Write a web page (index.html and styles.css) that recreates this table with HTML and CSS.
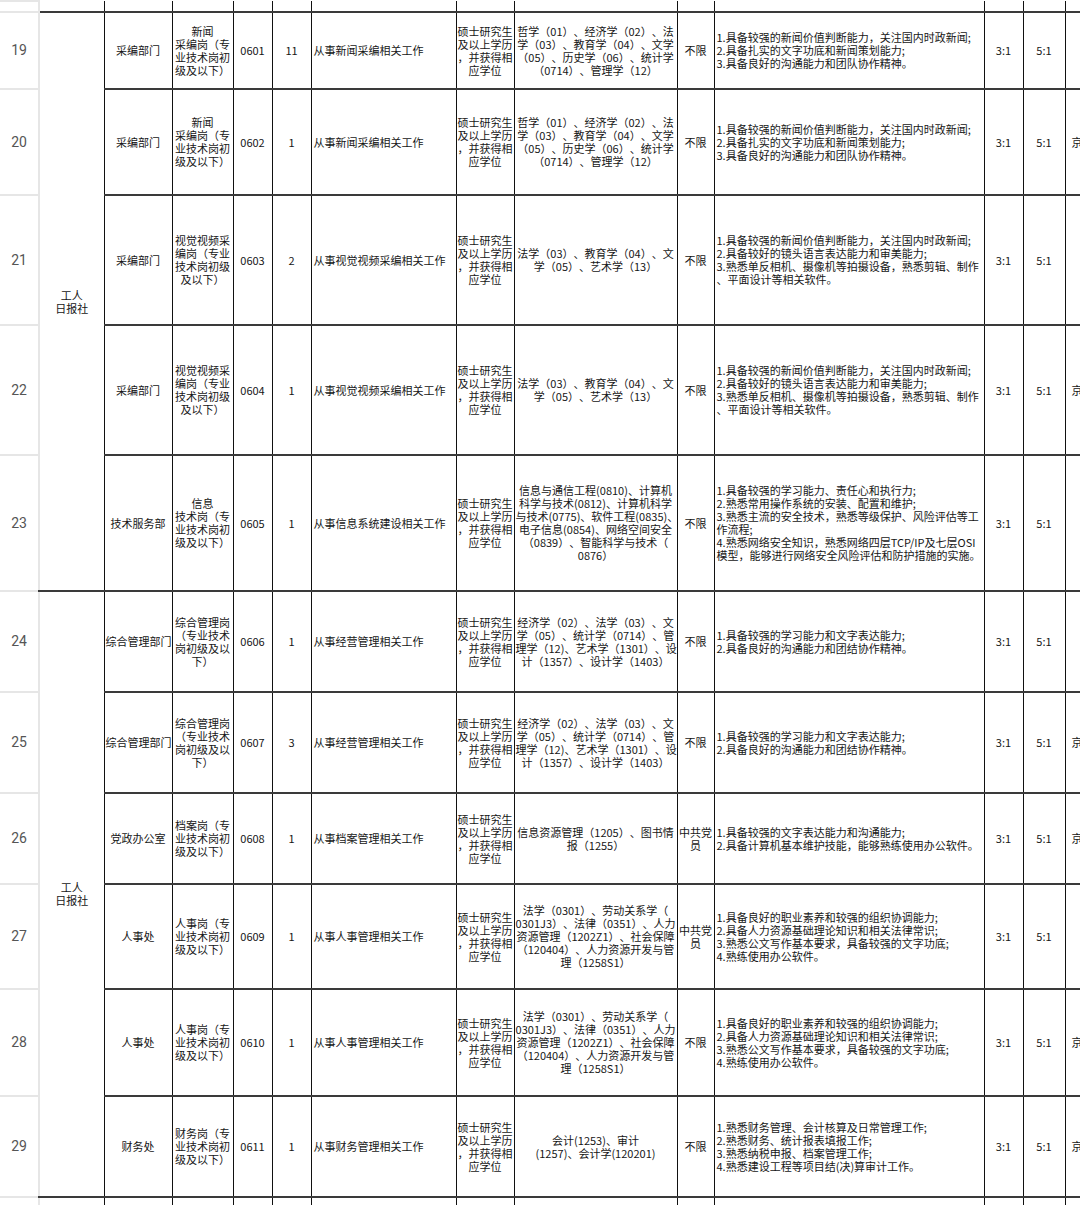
FILE: index.html
```html
<!DOCTYPE html>
<html lang="zh-CN">
<head>
<meta charset="utf-8">
<title>招聘岗位表</title>
<link rel="stylesheet" href="styles.css">
</head>
<body>
<table class="sheet">
<colgroup>
<col class="c-rn"><col class="c-unit"><col class="c-dept"><col class="c-post"><col class="c-code"><col class="c-num"><col class="c-desc"><col class="c-edu"><col class="c-major"><col class="c-pol"><col class="c-req"><col class="c-r1"><col class="c-r2"><col class="c-x">
</colgroup>
<tbody>
<tr class="top">
<td class="rn"></td><td></td><td></td><td></td><td></td><td></td><td></td><td></td><td></td><td></td><td></td><td></td><td></td><td></td>
</tr>
<tr class="h77">
<td class="rn">19</td>
<td class="unit" rowspan="5">工人<br>日报社</td>
<td>采编部门</td>
<td>新闻<br>采编岗（专<br>业技术岗初<br>级及以下）</td>
<td>0601</td>
<td>11</td>
<td class="l">从事新闻采编相关工作</td>
<td>硕士研究生<br>及以上学历<br>，并获得相<br>应学位</td>
<td>哲学（01）、经济学（02）、法<br>学（03）、教育学（04）、文学<br>（05）、历史学（06）、统计学<br>（0714）、管理学（12）</td>
<td>不限</td>
<td class="l">1.具备较强的新闻价值判断能力，关注国内时政新闻;<br>2.具备扎实的文字功底和新闻策划能力;<br>3.具备良好的沟通能力和团队协作精神。</td>
<td>3:1</td>
<td>5:1</td>
<td class="x"></td>
</tr>
<tr class="h106">
<td class="rn">20</td>
<td>采编部门</td>
<td>新闻<br>采编岗（专<br>业技术岗初<br>级及以下）</td>
<td>0602</td>
<td>1</td>
<td class="l">从事新闻采编相关工作</td>
<td>硕士研究生<br>及以上学历<br>，并获得相<br>应学位</td>
<td>哲学（01）、经济学（02）、法<br>学（03）、教育学（04）、文学<br>（05）、历史学（06）、统计学<br>（0714）、管理学（12）</td>
<td>不限</td>
<td class="l">1.具备较强的新闻价值判断能力，关注国内时政新闻;<br>2.具备扎实的文字功底和新闻策划能力;<br>3.具备良好的沟通能力和团队协作精神。</td>
<td>3:1</td>
<td>5:1</td>
<td class="x">京</td>
</tr>
<tr class="h130">
<td class="rn">21</td>
<td>采编部门</td>
<td>视觉视频采<br>编岗（专业<br>技术岗初级<br>及以下）</td>
<td>0603</td>
<td>2</td>
<td class="l">从事视觉视频采编相关工作</td>
<td>硕士研究生<br>及以上学历<br>，并获得相<br>应学位</td>
<td>法学（03）、教育学（04）、文<br>学（05）、艺术学（13）</td>
<td>不限</td>
<td class="l">1.具备较强的新闻价值判断能力，关注国内时政新闻;<br>2.具备较好的镜头语言表达能力和审美能力;<br>3.熟悉单反相机、摄像机等拍摄设备，熟悉剪辑、制作<br>、平面设计等相关软件。</td>
<td>3:1</td>
<td>5:1</td>
<td class="x"></td>
</tr>
<tr class="h130">
<td class="rn">22</td>
<td>采编部门</td>
<td>视觉视频采<br>编岗（专业<br>技术岗初级<br>及以下）</td>
<td>0604</td>
<td>1</td>
<td class="l">从事视觉视频采编相关工作</td>
<td>硕士研究生<br>及以上学历<br>，并获得相<br>应学位</td>
<td>法学（03）、教育学（04）、文<br>学（05）、艺术学（13）</td>
<td>不限</td>
<td class="l">1.具备较强的新闻价值判断能力，关注国内时政新闻;<br>2.具备较好的镜头语言表达能力和审美能力;<br>3.熟悉单反相机、摄像机等拍摄设备，熟悉剪辑、制作<br>、平面设计等相关软件。</td>
<td>3:1</td>
<td>5:1</td>
<td class="x">京</td>
</tr>
<tr class="h136">
<td class="rn">23</td>
<td>技术服务部</td>
<td>信息<br>技术岗（专<br>业技术岗初<br>级及以下）</td>
<td>0605</td>
<td>1</td>
<td class="l">从事信息系统建设相关工作</td>
<td>硕士研究生<br>及以上学历<br>，并获得相<br>应学位</td>
<td>信息与通信工程(0810)、计算机<br>科学与技术(0812)、计算机科学<br>与技术(0775)、软件工程(0835)、<br>电子信息(0854)、网络空间安全<br>（0839）、智能科学与技术（<br>0876）</td>
<td>不限</td>
<td class="l">1.具备较强的学习能力、责任心和执行力;<br>2.熟悉常用操作系统的安装、配置和维护;<br>3.熟悉主流的安全技术，熟悉等级保护、风险评估等工<br>作流程;<br>4.熟悉网络安全知识，熟悉网络四层TCP/IP及七层OSI<br>模型，能够进行网络安全风险评估和防护措施的实施。</td>
<td>3:1</td>
<td>5:1</td>
<td class="x"></td>
</tr>
<tr class="h101">
<td class="rn">24</td>
<td class="unit" rowspan="6">工人<br>日报社</td>
<td>综合管理部门</td>
<td>综合管理岗<br>（专业技术<br>岗初级及以<br>下）</td>
<td>0606</td>
<td>1</td>
<td class="l">从事经营管理相关工作</td>
<td>硕士研究生<br>及以上学历<br>，并获得相<br>应学位</td>
<td>经济学（02）、法学（03）、文<br>学（05）、统计学（0714）、管<br>理学（12)、艺术学（1301）、设<br>计（1357）、设计学（1403）</td>
<td>不限</td>
<td class="l">1.具备较强的学习能力和文字表达能力;<br>2.具备良好的沟通能力和团结协作精神。</td>
<td>3:1</td>
<td>5:1</td>
<td class="x"></td>
</tr>
<tr class="h101">
<td class="rn">25</td>
<td>综合管理部门</td>
<td>综合管理岗<br>（专业技术<br>岗初级及以<br>下）</td>
<td>0607</td>
<td>3</td>
<td class="l">从事经营管理相关工作</td>
<td>硕士研究生<br>及以上学历<br>，并获得相<br>应学位</td>
<td>经济学（02）、法学（03）、文<br>学（05）、统计学（0714）、管<br>理学（12)、艺术学（1301）、设<br>计（1357）、设计学（1403）</td>
<td>不限</td>
<td class="l">1.具备较强的学习能力和文字表达能力;<br>2.具备良好的沟通能力和团结协作精神。</td>
<td>3:1</td>
<td>5:1</td>
<td class="x">京</td>
</tr>
<tr class="h91">
<td class="rn">26</td>
<td>党政办公室</td>
<td>档案岗（专<br>业技术岗初<br>级及以下）</td>
<td>0608</td>
<td>1</td>
<td class="l">从事档案管理相关工作</td>
<td>硕士研究生<br>及以上学历<br>，并获得相<br>应学位</td>
<td>信息资源管理（1205）、图书情<br>报（1255）</td>
<td>中共党<br>员</td>
<td class="l">1.具备较强的文字表达能力和沟通能力;<br>2.具备计算机基本维护技能，能够熟练使用办公软件。</td>
<td>3:1</td>
<td>5:1</td>
<td class="x">京</td>
</tr>
<tr class="h105">
<td class="rn">27</td>
<td>人事处</td>
<td>人事岗（专<br>业技术岗初<br>级及以下）</td>
<td>0609</td>
<td>1</td>
<td class="l">从事人事管理相关工作</td>
<td>硕士研究生<br>及以上学历<br>，并获得相<br>应学位</td>
<td>法学（0301）、劳动关系学（<br>0301J3）、法律（0351）、人力<br>资源管理（1202Z1）、社会保障<br>（120404）、人力资源开发与管<br>理（1258S1）</td>
<td>中共党<br>员</td>
<td class="l">1.具备良好的职业素养和较强的组织协调能力;<br>2.具备人力资源基础理论知识和相关法律常识;<br>3.熟悉公文写作基本要求，具备较强的文字功底;<br>4.熟练使用办公软件。</td>
<td>3:1</td>
<td>5:1</td>
<td class="x"></td>
</tr>
<tr class="h107">
<td class="rn">28</td>
<td>人事处</td>
<td>人事岗（专<br>业技术岗初<br>级及以下）</td>
<td>0610</td>
<td>1</td>
<td class="l">从事人事管理相关工作</td>
<td>硕士研究生<br>及以上学历<br>，并获得相<br>应学位</td>
<td>法学（0301）、劳动关系学（<br>0301J3）、法律（0351）、人力<br>资源管理（1202Z1）、社会保障<br>（120404）、人力资源开发与管<br>理（1258S1）</td>
<td>不限</td>
<td class="l">1.具备良好的职业素养和较强的组织协调能力;<br>2.具备人力资源基础理论知识和相关法律常识;<br>3.熟悉公文写作基本要求，具备较强的文字功底;<br>4.熟练使用办公软件。</td>
<td>3:1</td>
<td>5:1</td>
<td class="x">京</td>
</tr>
<tr class="h101">
<td class="rn">29</td>
<td>财务处</td>
<td>财务岗（专<br>业技术岗初<br>级及以下）</td>
<td>0611</td>
<td>1</td>
<td class="l">从事财务管理相关工作</td>
<td>硕士研究生<br>及以上学历<br>，并获得相<br>应学位</td>
<td>会计(1253)、审计<br>(1257)、会计学(120201)</td>
<td>不限</td>
<td class="l">1.熟悉财务管理、会计核算及日常管理工作;<br>2.熟悉财务、统计报表填报工作;<br>3.熟悉纳税申报、档案管理工作;<br>4.熟悉建设工程等项目结(决)算审计工作。</td>
<td>3:1</td>
<td>5:1</td>
<td class="x">京</td>
</tr>
<tr class="bottom">
<td class="rn"></td><td></td><td></td><td></td><td></td><td></td><td></td><td></td><td></td><td></td><td></td><td></td><td></td><td></td>
</tr>
</tbody>
</table>
</body>
</html>
```

FILE: styles.css
```css
html, body {
  margin: 0;
  padding: 0;
  background: #ffffff;
  overflow: hidden;
}

body {
  font-family: "Noto Sans CJK SC", "Noto Sans", sans-serif;
  font-size: 11px;
  line-height: 13px;
  color: #161616;
  text-spacing-trim: space-all;
}

.sheet {
  border-collapse: collapse;
  table-layout: fixed;
  width: 1125px;
}

.c-rn { width: 39px; }
.c-unit { width: 65px; }
.c-dept { width: 68px; }
.c-post { width: 61px; }
.c-code { width: 39px; }
.c-num { width: 39px; }
.c-desc { width: 145px; }
.c-edu { width: 58px; }
.c-major { width: 163px; }
.c-pol { width: 37px; }
.c-req { width: 270px; }
.c-r1 { width: 39px; }
.c-r2 { width: 42px; }
.c-x { width: 60px; }

.sheet td {
  border-left: 1px solid #111111;
  border-right: 1px solid #111111;
  border-top: 2px solid #3a3a3a;
  border-bottom: 2px solid #3a3a3a;
  padding: 0 1px;
  text-align: center;
  vertical-align: middle;
  white-space: nowrap;
}

.sheet td.l {
  text-align: left;
  padding-left: 2px;
}

.sheet td.rn {
  border: 2px solid #e6e6e6;
  border-left: none;
  color: #555555;
  font-family: Roboto, "Noto Sans", sans-serif;
  font-size: 14px;
}

.sheet td.unit {
  border-left: 2px solid #e6e6e6;
}

.sheet td.x {
  text-align: left;
  padding-left: 6px;
}

.top td {
  border-top: none;
}

.top { height: 11px; }
.h77 { height: 77px; }
.h91 { height: 91px; }
.h101 { height: 101px; }
.h105 { height: 105px; }
.h106 { height: 106px; }
.h107 { height: 107px; }
.h130 { height: 130px; }
.h136 { height: 136px; }
.bottom { height: 30px; }
```
